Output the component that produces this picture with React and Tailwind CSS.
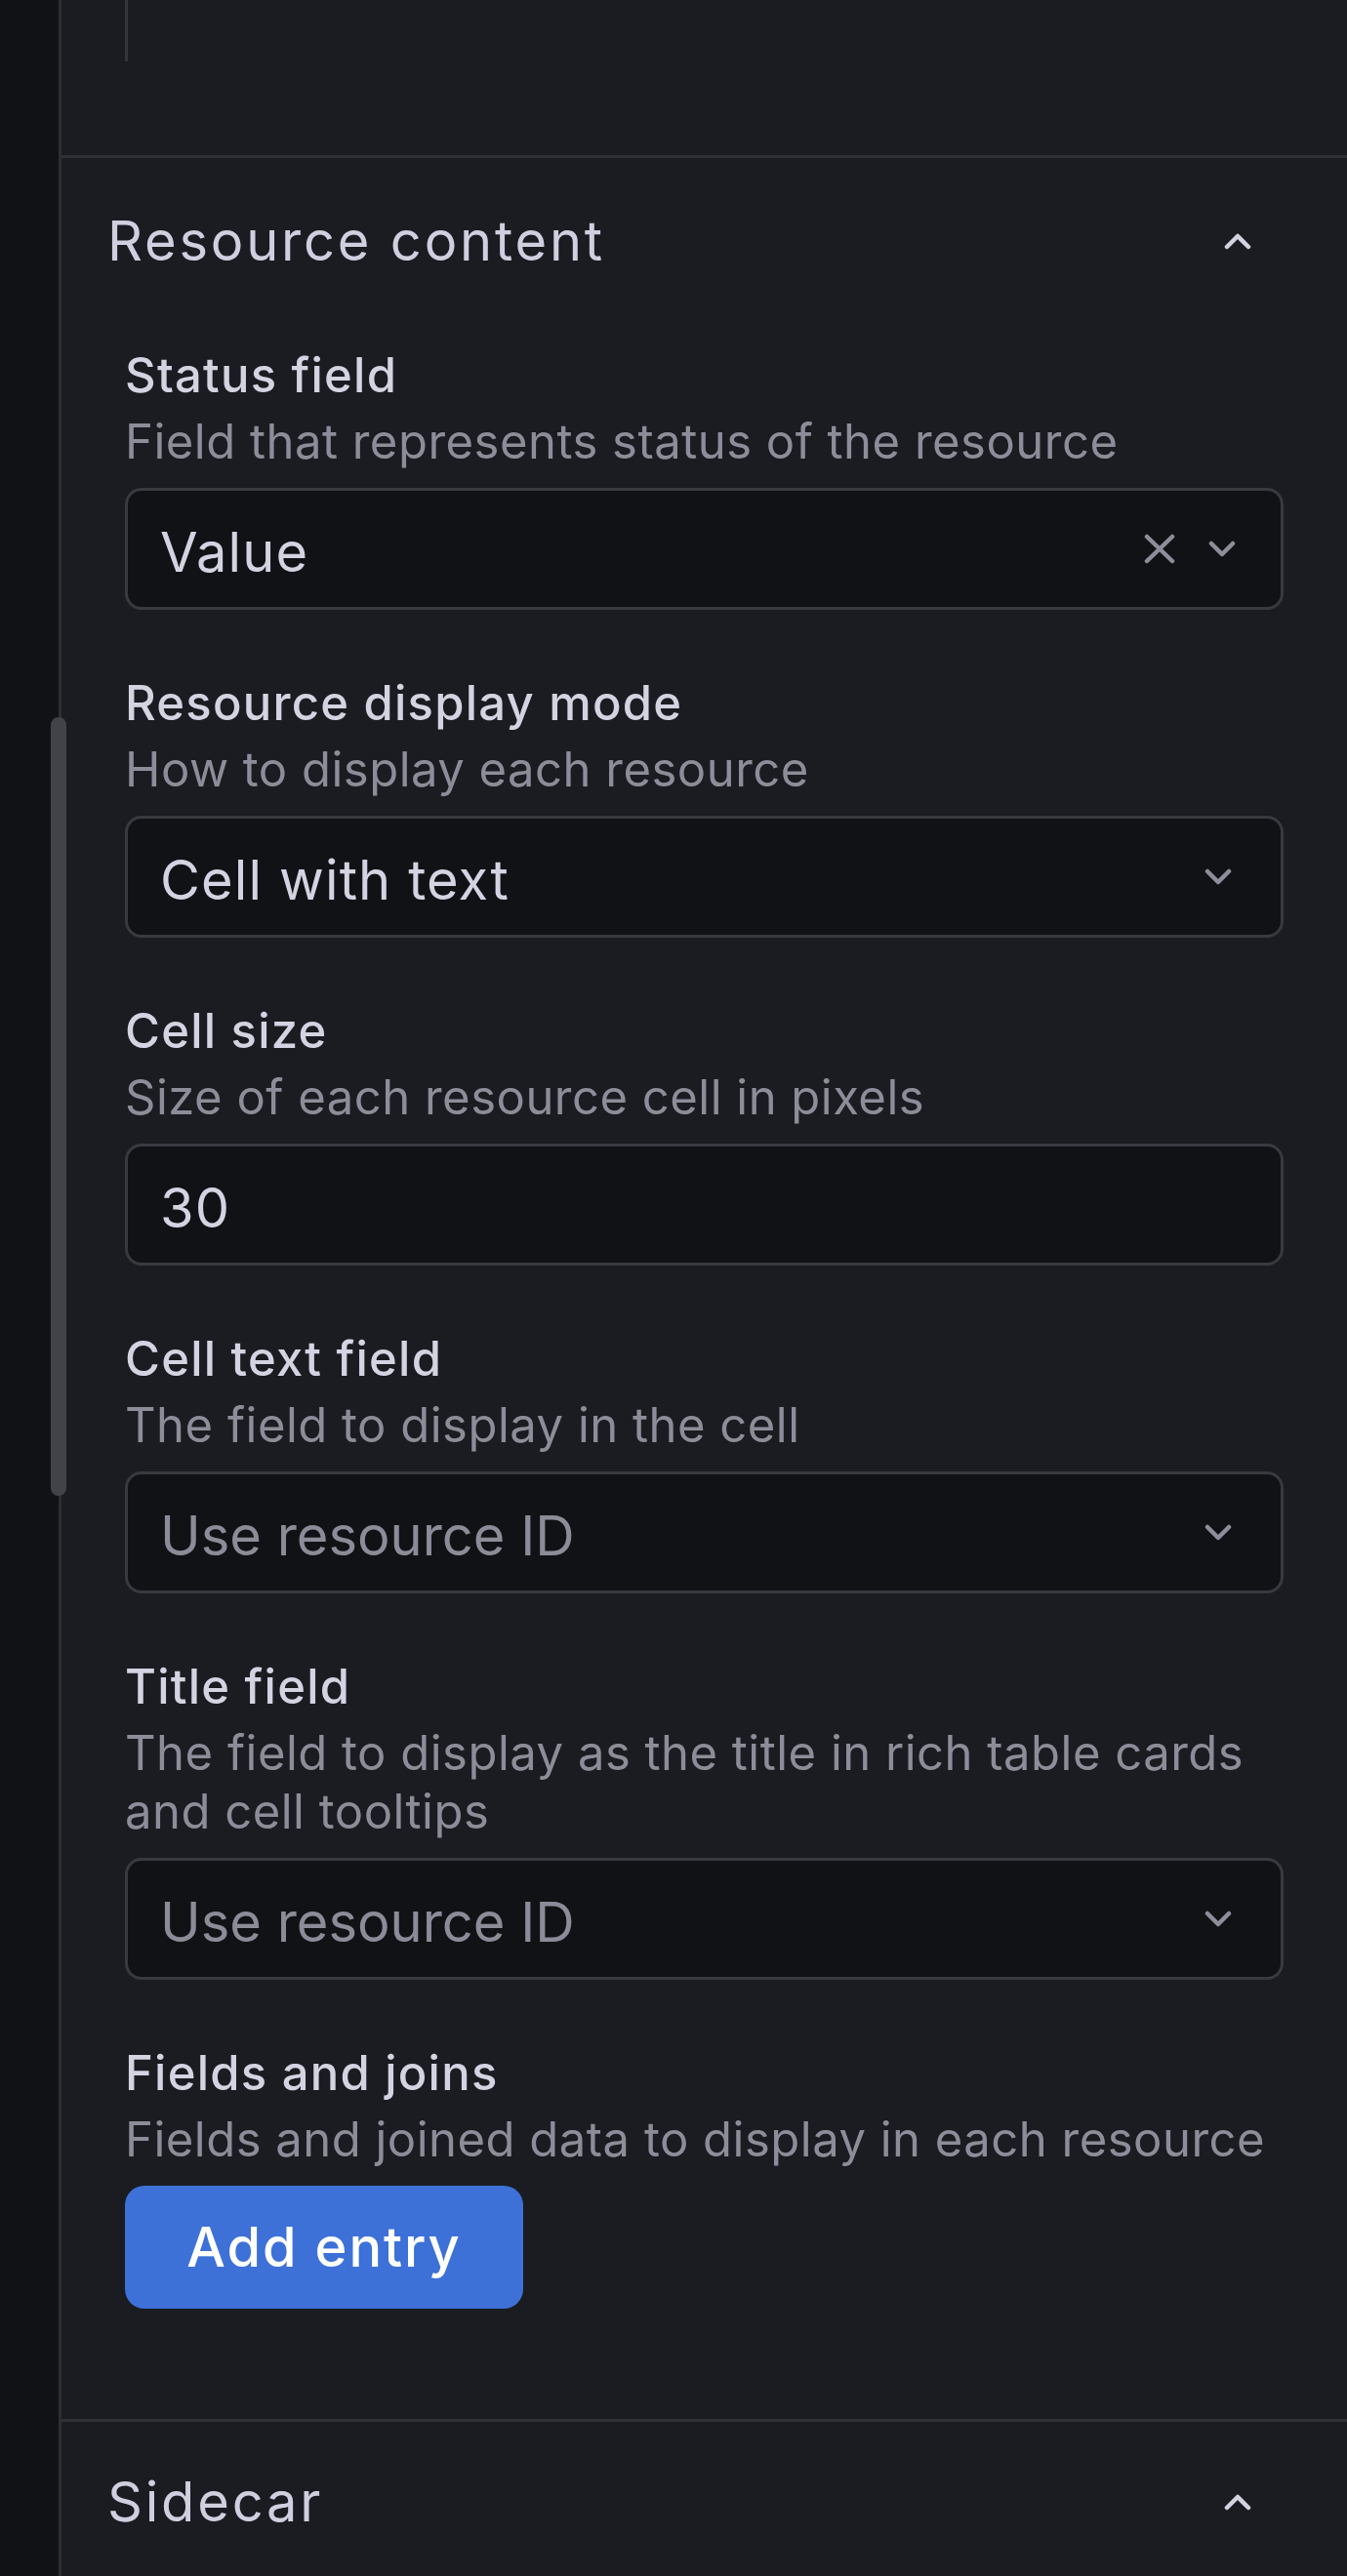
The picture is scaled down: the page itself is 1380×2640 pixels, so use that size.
import React from "react";

function ChevronDown({ className = "" }) {
  return (
    <svg width="28" height="17" viewBox="0 0 28 17" className={className} fill="none">
      <polyline points="3,3 14,14 25,3" stroke="currentColor" strokeWidth="4.5" strokeLinecap="round" strokeLinejoin="round" />
    </svg>
  );
}

function ChevronUp({ className = "" }) {
  return (
    <svg width="28" height="17" viewBox="0 0 28 17" className={className} fill="none">
      <polyline points="3,14 14,3 25,14" stroke="currentColor" strokeWidth="4.5" strokeLinecap="round" strokeLinejoin="round" />
    </svg>
  );
}

function XIcon({ className = "" }) {
  return (
    <svg width="32" height="31" viewBox="0 0 32 31" className={className} fill="none">
      <line x1="3" y1="3" x2="29" y2="28" stroke="currentColor" strokeWidth="4.5" strokeLinecap="round" />
      <line x1="29" y1="3" x2="3" y2="28" stroke="currentColor" strokeWidth="4.5" strokeLinecap="round" />
    </svg>
  );
}

function SectionHeader({ title }) {
  return (
    <div className="flex h-[70px] items-center justify-between pl-[47px] pr-[98px]">
      <span className="text-[56px] leading-[70px] tracking-[0.05em] text-[#cfcfdf]">{title}</span>
      <ChevronUp className="text-[#d2d2e0]" />
    </div>
  );
}

function Field({ label, desc, children }) {
  return (
    <div className="flex flex-col">
      <div className="text-[49px] leading-[70px] font-medium tracking-[0.025em] text-[#d3d3e1]">{label}</div>
      <div className="mt-[3px] text-[49px] leading-[60px] tracking-[0.01em] text-[#8d8d99]">{desc}</div>
      <div className="mt-[17px]">{children}</div>
    </div>
  );
}

function SelectBox({ value, placeholder, clearable }) {
  return (
    <div className="flex h-[125px] items-center rounded-[17px] border-[3px] border-[#393a40] bg-[#111216] pl-[33px]">
      <span
        className={
          "flex-1 pt-[6px] text-[56px] leading-none " +
          (placeholder ? "tracking-normal text-[#8c8c98]" : "tracking-[0.02em] text-[#d3d3e1]")
        }
      >
        {value}
      </span>
      {clearable ? (
        <div className="flex items-center pr-[46px]">
          <XIcon className="text-[#8e8e9a]" />
          <ChevronDown className="ml-[34px] text-[#8e8e9a]" />
        </div>
      ) : (
        <div className="flex items-center pr-[50px]">
          <ChevronDown className="text-[#8e8e9a]" />
        </div>
      )}
    </div>
  );
}

function TextInput({ value }) {
  return (
    <div className="flex h-[125px] items-center rounded-[17px] border-[3px] border-[#393a40] bg-[#111216] pl-[33px]">
      <span className="pt-[6px] text-[56px] leading-none tracking-[0.02em] text-[#d3d3e1]">{value}</span>
    </div>
  );
}

export default function App() {
  return (
    <div
      className="relative flex h-[2640px] w-[1380px] overflow-hidden bg-[#1a1c21]"
      style={{ fontFamily: "Inter, 'Noto Sans', 'Liberation Sans', sans-serif" }}
    >
      {/* dark left strip */}
      <div className="h-full w-[60px] shrink-0 bg-[#111215]" />
      {/* panel */}
      <div className="flex h-full flex-1 flex-col border-l-[3px] border-[#2c2e33]">
        {/* previous section tail */}
        <div className="h-[159px] shrink-0">
          <div className="ml-[65px] h-[63px] w-[3px] bg-[#33353a]" />
        </div>

        {/* Resource content section */}
        <div className="flex shrink-0 flex-col border-t-[3px] border-[#2e3035] pt-[50px] pb-[113px]">
          <SectionHeader title="Resource content" />
          <div className="mt-[68px] flex flex-col gap-[61px] pl-[65px] pr-[65px]">
            <Field label="Status field" desc="Field that represents status of the resource">
              <SelectBox value="Value" clearable />
            </Field>
            <Field label="Resource display mode" desc="How to display each resource">
              <SelectBox value="Cell with text" />
            </Field>
            <Field label="Cell size" desc="Size of each resource cell in pixels">
              <TextInput value="30" />
            </Field>
            <Field label="Cell text field" desc="The field to display in the cell">
              <SelectBox value="Use resource ID" placeholder />
            </Field>
            <Field
              label="Title field"
              desc="The field to display as the title in rich table cards and cell tooltips"
            >
              <SelectBox value="Use resource ID" placeholder />
            </Field>
            <Field label="Fields and joins" desc="Fields and joined data to display in each resource">
              <button className="flex h-[126px] w-[408px] items-center justify-center rounded-[20px] bg-[#3d71d8] text-[56px] font-medium tracking-[0.035em] text-white">
                Add entry
              </button>
            </Field>
          </div>
        </div>

        {/* Sidecar section */}
        <div className="flex flex-1 flex-col border-t-[3px] border-[#2e3035] pt-[47px]">
          <SectionHeader title="Sidecar" />
        </div>
      </div>

      {/* scrollbar thumb overlay */}
      <div className="absolute left-[52px] top-[735px] h-[798px] w-[16px] rounded-full bg-[#424349]" />
    </div>
  );
}
